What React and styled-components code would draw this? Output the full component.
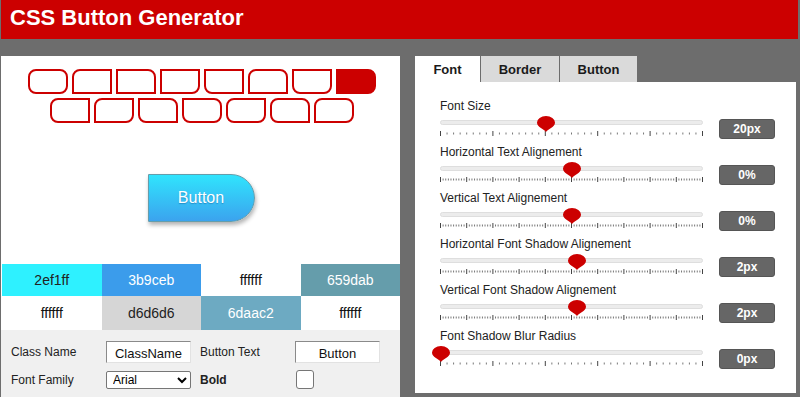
import React from 'react';
import styled, { createGlobalStyle } from 'styled-components';

const GlobalStyle = createGlobalStyle`
    body{
        margin:0;
        background:#6d6d6d;
        font-family:"Liberation Sans", Arial, sans-serif;
        overflow:hidden;
    }
`

const shapes = [
    [8, 8, 8, 8], [8, 0, 0, 0], [0, 8, 0, 0], [0, 0, 8, 0],
    [0, 0, 0, 8], [8, 8, 0, 0], [0, 0, 8, 8], [0, 8, 8, 0],
];
const shapes2 = [
    [8, 0, 0, 8], [8, 0, 8, 0], [0, 8, 0, 8], [0, 8, 8, 8],
    [8, 0, 8, 8], [8, 8, 0, 8], [8, 8, 8, 0],
];

const colors = [
    { hex: '2ef1ff', text: '#222' },
    { hex: '3b9ceb', text: '#fff' },
    { hex: 'ffffff', text: '#111' },
    { hex: '659dab', text: '#fff' },
    { hex: 'ffffff', text: '#111' },
    { hex: 'd6d6d6', text: '#222' },
    { hex: '6daac2', text: '#fff' },
    { hex: 'ffffff', text: '#111' },
];

const sliders = [
    { label: 'Font Size', pos: 0.4, value: '20px', dense: false },
    { label: 'Horizontal Text Alignement', pos: 0.5, value: '0%', dense: true },
    { label: 'Vertical Text Alignement', pos: 0.5, value: '0%', dense: true },
    { label: 'Horizontal Font Shadow Alignement', pos: 0.52, value: '2px', dense: true },
    { label: 'Vertical Font Shadow Alignement', pos: 0.52, value: '2px', dense: true },
    { label: 'Font Shadow Blur Radius', pos: 0, value: '0px', dense: false },
];

function Ticks({ dense }) {
    const count = dense ? 100 : 40;
    const major = dense ? 10 : 8;
    const w = 262;
    const lines = [];
    for (let i = 0; i <= count; i++) {
        const x = 0.5 + (w * i) / count;
        const big = i % major === 0;
        lines.push(
            <line key={i} x1={x} x2={x} y1={big ? 0 : 1.5} y2={big ? 5 : 3.5}
                stroke={big ? '#444' : '#777'} strokeWidth="1" />
        );
    }
    return <TickSvg width="263" height="5" viewBox="0 0 263 5">{lines}</TickSvg>;
}

function Slider({ label, pos, value, dense }) {
    return (
        <SliderRow>
            <SliderLabel>{label}</SliderLabel>
            <Control>
                <TrackWrap>
                    <Track />
                    <Ticks dense={dense} />
                    <Thumb $pos={pos} width="18" height="16" viewBox="0 0 18 16">
                        <path d="M9 16 C6.5 12.5 0 11.5 0 6.5 A9 6.5 0 0 1 18 6.5 C18 11.5 11.5 12.5 9 16 Z" fill="#cc0000" />
                    </Thumb>
                </TrackWrap>
                <Badge>{value}</Badge>
            </Control>
        </SliderRow>
    );
}

export default function App() {
    return (
        <Page>
            <GlobalStyle />
            <Header>
                <h1>CSS Button Generator</h1>
            </Header>
            <Main>
                <LeftPanel>
                    <ShapeRow>
                        {shapes.map((r, i) => <Shape key={i} $r={r} $active={i === 7} />)}
                    </ShapeRow>
                    <ShapeRow>
                        {shapes2.map((r, i) => <Shape key={i} $r={r} />)}
                    </ShapeRow>
                    <Preview>
                        <PreviewButton>Button</PreviewButton>
                    </Preview>
                    <ColorGrid>
                        {colors.map((c, i) =>
                            <ColorCell key={i} $bg={'#' + c.hex} $fg={c.text}>{c.hex}</ColorCell>
                        )}
                    </ColorGrid>
                    <Form>
                        <FieldLabel>Class Name</FieldLabel>
                        <TextInput defaultValue="ClassName" />
                        <FieldLabel>Button Text</FieldLabel>
                        <TextInput defaultValue="Button" />
                        <FieldLabel>Font Family</FieldLabel>
                        <Select defaultValue="Arial">
                            <option>Arial</option>
                        </Select>
                        <FieldLabel $bold>Bold</FieldLabel>
                        <Check type="checkbox" />
                    </Form>
                </LeftPanel>
                <RightPanel>
                    <Tabs>
                        <Tab $active $w={65}>Font</Tab>
                        <Tab $w={78}>Border</Tab>
                        <Tab $w={77}>Button</Tab>
                    </Tabs>
                    <TabBody>
                        {sliders.map((s) => <Slider key={s.label} {...s} />)}
                    </TabBody>
                </RightPanel>
            </Main>
        </Page>
    );
}

const Page = styled.div`
    padding:0 2px 0 1px;
`
const Header = styled.header`
    height:39px;
    background:#cc0000;
    display:flex;
    align-items:center;
    padding-left:9px;
    h1{
        margin:0;
        color:#fff;
        font-size:22px;
        font-weight:bold;
        line-height:1;
        margin-top:-3px;
    }
`
const Main = styled.div`
    display:flex;
    gap:15px;
    padding-top:17px;
`
const LeftPanel = styled.section`
    width:399px;
    height:360px;
    background:#fff;
    padding-top:13px;
    box-sizing:border-box;
    display:flex;
    flex-direction:column;
`
const ShapeRow = styled.div`
    display:flex;
    justify-content:center;
    gap:4px;
    margin-bottom:4px;
    padding-left:2px;
`
const Shape = styled.div`
    width:40px;
    height:25px;
    box-sizing:border-box;
    border:2px solid #cc0000;
    background:${p => p.$active ? '#cc0000' : '#fff'};
    border-radius:${p => p.$r.map(v => v + 'px').join(' ')};
`
const Preview = styled.div`
    height:137px;
    display:flex;
    justify-content:center;
    padding-top:47px;
    box-sizing:border-box;
    padding-left:1px;
`
const PreviewButton = styled.button`
    width:107px;
    height:48px;
    border:1px solid #659dab;
    border-radius:0 24px 24px 0;
    background:linear-gradient(#30e4fd, #3ba3ee);
    color:#fff;
    font-family:"Liberation Sans", Arial, sans-serif;
    font-size:16px;
    text-shadow:0 1px 1px rgba(0,60,120,0.35);
    box-shadow:1px 3px 4px rgba(0,0,0,0.3);
`
const ColorGrid = styled.div`
    display:grid;
    grid-template-columns:repeat(4, 1fr);
    grid-template-rows:32px 34px;
    padding-left:1px;
`
const ColorCell = styled.div`
    background:${p => p.$bg};
    color:${p => p.$fg};
    display:flex;
    align-items:center;
    justify-content:center;
    font-size:14px;
`
const Form = styled.div`
    flex:1;
    background:#f0f0f0;
    display:grid;
    grid-template-columns:95px 94px 95px 85px;
    grid-template-rows:22px 19px;
    row-gap:7px;
    align-items:center;
    padding:11px 0 0 10px;
`
const FieldLabel = styled.span`
    font-size:12px;
    color:#222;
    font-weight:${p => p.$bold ? 'bold' : 'normal'};
`
const TextInput = styled.input`
    width:85px;
    height:22px;
    box-sizing:border-box;
    border:1px solid;
    border-color:#8a8a8a #e2e2e2 #e2e2e2 #8a8a8a;
    background:#fff;
    text-align:center;
    font-family:"Liberation Sans", Arial, sans-serif;
    font-size:13px;
    color:#111;
    padding:2px 0 0;
`
const Select = styled.select`
    width:85px;
    height:18px;
    box-sizing:border-box;
    border:1px solid #767676;
    border-radius:2px;
    background:#fff;
    font-family:"Liberation Sans", Arial, sans-serif;
    font-size:12px;
    padding:0 2px;
`
const Check = styled.input`
    appearance:none;
    margin:0 0 0 1px;
    width:18px;
    height:19px;
    border:1px solid #767676;
    border-radius:3px;
    background:#fff;
`
const RightPanel = styled.section`
    width:381px;
    display:flex;
    flex-direction:column;
`
const Tabs = styled.div`
    display:flex;
    gap:1px;
    height:26px;
`
const Tab = styled.div`
    width:${p => p.$w}px;
    background:${p => p.$active ? '#fff' : '#dadada'};
    display:flex;
    align-items:center;
    justify-content:center;
    font-size:13px;
    font-weight:bold;
    color:#1a1a1a;
`
const TabBody = styled.div`
    background:#fff;
    height:311px;
    box-sizing:border-box;
    padding:16px 0 0 25px;
`
const SliderRow = styled.div`
    height:46px;
`
const SliderLabel = styled.div`
    font-size:12px;
    line-height:16px;
    color:#222;
`
const Control = styled.div`
    display:flex;
    align-items:flex-start;
    height:30px;
`
const TrackWrap = styled.div`
    position:relative;
    width:263px;
    height:30px;
`
const Track = styled.div`
    position:absolute;
    top:6px;
    left:0;
    right:0;
    height:5px;
    box-sizing:border-box;
    background:#ececec;
    border:1px solid #dedede;
    border-radius:3px;
`
const TickSvg = styled.svg`
    position:absolute;
    top:17px;
    left:0;
    display:block;
`
const Thumb = styled.svg`
    position:absolute;
    top:2px;
    left:${p => p.$pos * 262 - 9 + 1}px;
    display:block;
`
const Badge = styled.div`
    margin:5px 0 0 16px;
    width:56px;
    height:20px;
    box-sizing:border-box;
    background:#666;
    border:1px solid #555;
    border-radius:3px;
    color:#fff;
    font-size:12px;
    font-weight:bold;
    display:flex;
    align-items:center;
    justify-content:center;
`
